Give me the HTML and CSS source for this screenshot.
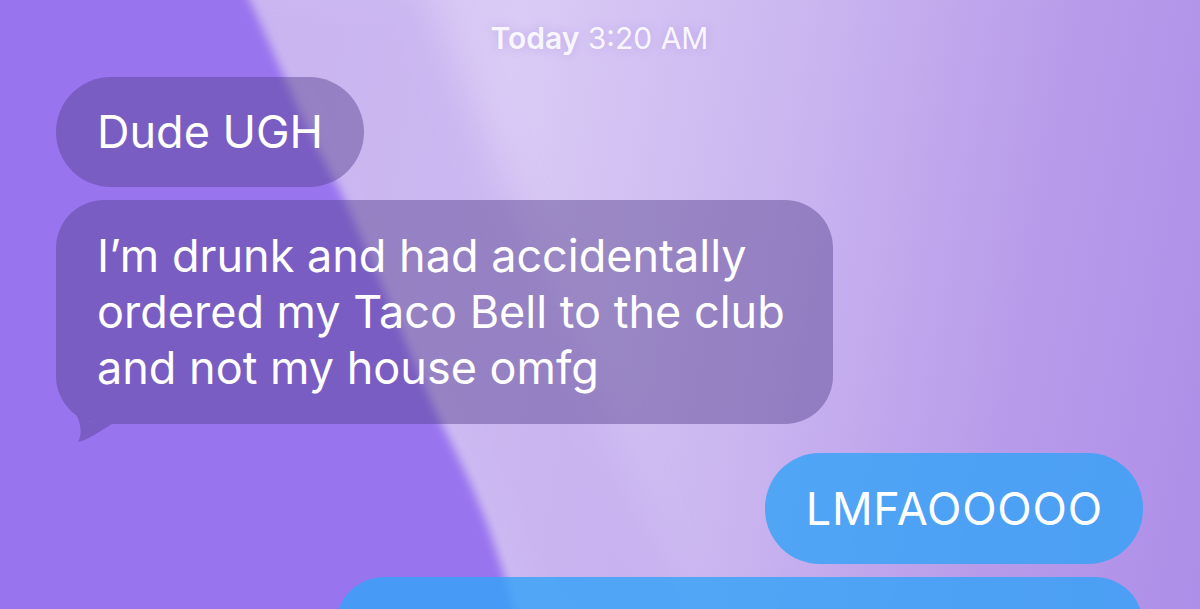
FILE: index.html
```html
<!DOCTYPE html>
<html lang="en">
<head>
    <meta charset="UTF-8">
    <meta name="viewport" content="width=device-width, initial-scale=1.0">
    <title>Messages</title>
    <link rel="stylesheet" href="styles.css">
</head>
<body>
    <div class="screen">
        <!-- wallpaper shape behind the thread -->
        <svg class="wallpaper" width="1200" height="609" viewBox="0 0 1200 609">
            <defs>
                <filter id="soft" x="-20%" y="-20%" width="140%" height="140%">
                    <feGaussianBlur stdDeviation="5"/>
                </filter>
                <filter id="softer" x="-20%" y="-20%" width="140%" height="140%">
                    <feGaussianBlur stdDeviation="18"/>
                </filter>
            </defs>
            <path d="M 200 -20 C 280 100 360 300 430 420 C 470 500 500 560 530 640 L 700 640 C 640 500 560 300 420 -20 Z" fill="#c4acef" opacity="0.6" filter="url(#softer)"/>
            <path d="M -40 -20 L 205 -20 C 215 0 225 20 232 40 L 240 660 L -40 660 Z" fill="#a987ee" filter="url(#soft)"/>
            <path d="M -40 -20 L 240 -20 C 270 40 300 120 340 190 C 390 300 420 380 445 430 C 470 480 495 530 522 640 L -40 640 Z" fill="#9875ef" filter="url(#soft)"/>
        </svg>

        <div class="thread">
            <div class="stamp"><b>Today</b> 3:20 AM</div>

            <div class="msg received">Dude UGH</div>
            <div class="msg received long">
                I’m drunk and had accidentally<br>
                ordered my Taco Bell to the club<br>
                and not my house omfg
                <svg class="tail" width="60" height="70" viewBox="0 -48 60 70">
                    <path d="M 20.5 -8.7 C 24 -2 27 10 22 18 C 32 16 46 6 56 0 L 48 0 A 48 48 0 0 1 20.5 -8.7 Z"/>
                </svg>
            </div>

            <div class="msg sent">LMFAOOOOO</div>
            <div class="msg sent next"></div>
        </div>
    </div>
</body>
</html>
```

FILE: styles.css
```css
body {
    margin: 0;
    font-family: Inter, "Liberation Sans", Arial, sans-serif;
    background-color: #c9b5ee;
}
.screen {
    position: relative;
    width: 1200px;
    height: 609px;
    overflow: hidden;
    background: linear-gradient(100deg, #cdbaf0 0%, #d9cbf5 40%, #cbb6f0 62%, #b89cea 82%, #ad8ee8 100%);
}
.wallpaper {
    position: absolute;
    top: 0;
    left: 0;
}
.thread {
    position: relative;
    display: flex;
    flex-direction: column;
    padding: 21px 57px 0 56px;
}
.stamp {
    text-align: center;
    font-size: 30px;
    line-height: 34px;
    color: rgba(255, 255, 255, 0.88);
    text-shadow: 0 0 8px rgba(150, 120, 220, 0.35);
    margin-bottom: 22px;
}
.stamp b {
    font-weight: 600;
}
.msg {
    position: relative;
    font-size: 45px;
    line-height: 56px;
    color: #ffffff;
    padding: 27px 41px;
    border-radius: 55px;
}
.received {
    align-self: flex-start;
    background-color: rgba(85, 65, 140, 0.45);
}
.long {
    margin-top: 13px;
    padding: 28px 48px 28px 41px;
    border-radius: 48px;
}
.tail {
    position: absolute;
    left: 0;
    top: calc(100% - 48px);
    overflow: visible;
}
.tail path {
    fill: rgba(85, 65, 140, 0.45);
}
.sent {
    align-self: flex-end;
    margin-top: 29px;
    padding: 28px 40px 27px 41px;
    letter-spacing: 0.8px;
    background-color: rgba(54, 162, 246, 0.82);
}
.next {
    margin-top: 13px;
    width: 807px;
    height: 120px;
    padding: 0;
    border-radius: 48px;
}
```
